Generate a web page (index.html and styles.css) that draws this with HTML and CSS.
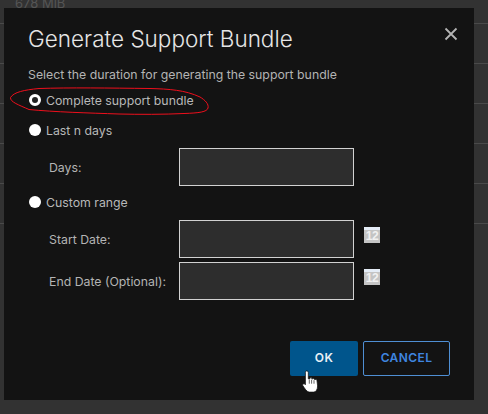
FILE: index.html
```html
<!DOCTYPE html>
<html lang="en">
<head>
<meta charset="utf-8">
<title>Generate Support Bundle</title>
<link rel="stylesheet" href="styles.css">
</head>
<body>
<div class="backdrop">
  <div class="bg-row bg-row-first"><span class="bg-text">678 MiB</span></div>
  <div class="bg-row"></div>
  <div class="bg-row"></div>
  <div class="bg-row"></div>
  <div class="bg-row"></div>
  <div class="bg-row"></div>
</div>
<div class="modal">
  <div class="modal-head">
    <h1 class="title">Generate Support Bundle</h1>
    <svg class="close" width="14" height="14" viewBox="0 0 14 14"><path d="M1.5 1.5 L12.5 12.5 M12.5 1.5 L1.5 12.5" stroke="#b4b4b4" stroke-width="1.8" fill="none"/></svg>
  </div>
  <p class="intro">Select the duration for generating the support bundle</p>
  <div class="radio-row r1"><span class="radio checked"></span><span class="radio-label">Complete support bundle</span></div>
  <div class="radio-row r2"><span class="radio"></span><span class="radio-label">Last n days</span></div>
  <div class="field f-days"><span class="field-label">Days:</span><span class="input"></span></div>
  <div class="radio-row r3"><span class="radio"></span><span class="radio-label">Custom range</span></div>
  <div class="field f-start"><span class="field-label">Start Date:</span><span class="input"></span><span class="cal"><span class="cal-num">12</span></span></div>
  <div class="field f-end"><span class="field-label">End Date (Optional):</span><span class="input"></span><span class="cal"><span class="cal-num">12</span></span></div>
  <div class="actions">
    <button class="btn btn-ok">OK</button>
    <button class="btn btn-cancel">CANCEL</button>
  </div>
</div>
<svg class="scribble" width="210" height="34" viewBox="0 0 210 34"><path d="M30 1.5 C60 0.5 100 1 141 1.5 C160 2 176 3 191 10 C196 13 200 17 199 21 C198 25 190 26 175 26.5 C155 27.5 130 27.5 110 27 C80 26 45 25 20 22.5 C10 18 1 15 1.5 10.5 C5 5 15 3 30 1.5 Z" fill="none" stroke="#ee0f1c" stroke-width="1"/></svg>
<svg class="cursor" width="17" height="23" viewBox="0 0 17 26" preserveAspectRatio="none"><path d="M4.5 1 C5.8 1 6.3 1.8 6.3 3 L6.3 10 L8 10 L8 8.6 C9.2 8.2 9.8 8.8 9.8 10 L10.6 10 C11.4 9.4 12.2 9.6 12.4 10.6 L13 10.8 C14.2 10.4 15 11 15 12.2 L15.6 18 C15.6 22 14 24.6 12 25 L7 25 C4.6 24.4 2.8 21 0.8 17.6 C0.2 16.2 1.4 15 2.8 15.8 L3.4 16.6 L3.4 3 C3.4 1.8 3.8 1 4.5 1 Z" fill="#fff" stroke="#111" stroke-width="0.8"/><path d="M7.3 11 V15.5 M9.6 11 V15.5 M12 11.5 V15.5" stroke="#333" stroke-width="0.8" fill="none"/></svg>
</body>
</html>
```
FILE: styles.css
```css
* { box-sizing: border-box; }
html, body { margin: 0; padding: 0; }
body {
  width: 488px;
  height: 414px;
  overflow: hidden;
  position: relative;
  background: #323232;
  font-family: "Inter", "Liberation Sans", sans-serif;
}
.backdrop { display: flex; flex-direction: column; }
.bg-row { height: 40px; border-bottom: 1px solid #4a4a4a; }
.bg-row-first { height: 24px; color: #555; font-size: 13px; line-height: 14px; padding-left: 15px; }
.bg-text { display: block; margin-top: -4px; }
.modal {
  position: absolute;
  left: 4px;
  top: 8px;
  width: 470px;
  height: 392px;
  background: #131313;
  padding: 17px 0 0 24px;
  color: #b4b4b4;
  font-size: 12.3px;
}
.modal-head { display: flex; justify-content: space-between; padding-right: 16px; height: 27px; }
.title { margin: 0; font-size: 22.5px; font-weight: 300; line-height: 27px; color: #e6e6e6; }
.close { margin-top: 2px; }
.intro { margin: 15px 0 0; line-height: 16px; }
.radio-row { display: flex; align-items: center; gap: 5px; height: 16px; color: #b8b8b8; }
.r1 { margin-top: 9px; }
.r2 { margin-top: 14px; }
.r3 { margin-top: 8px; }
.radio { width: 12px; height: 12px; border-radius: 50%; background: #fff; margin-left: 1px; }
.radio.checked { background: #222; border: 3.5px solid #fff; }
.field { display: flex; align-items: center; padding-left: 21px; margin-top: 10px; }
.f-end { margin-top: 4px; }
.field-label { width: 130px; color: #b4b4b4; }
.input { width: 175px; height: 38px; background: #2d2d2d; border: 1px solid #d2d2d2; display: block; }
.cal { width: 16px; height: 16px; margin-left: 10px; margin-top: -8px; background: #c4c4c4; border-top: 3px solid #e4ecf6; display: flex; align-items: center; justify-content: center; }
.cal-num { color: #f0f0f0; font-family: "Liberation Sans", sans-serif; font-size: 12px; font-weight: 700; letter-spacing: -0.3px; line-height: 13px; }
.actions { position: absolute; right: 24px; top: 333px; display: flex; gap: 5px; }
.btn { height: 35px; border-radius: 2px; font-family: inherit; font-size: 12px; font-weight: 600; letter-spacing: 0.4px; padding: 0 0 2px; }
.btn-ok { width: 68px; background: #00558c; border: 0; color: #eaf1f6; }
.btn-cancel { width: 87px; background: transparent; border: 1px solid #4f8fd4; color: #3f86e0; }
.scribble { position: absolute; left: 9px; top: 87px; }
.cursor { position: absolute; left: 302px; top: 370px; }
```
